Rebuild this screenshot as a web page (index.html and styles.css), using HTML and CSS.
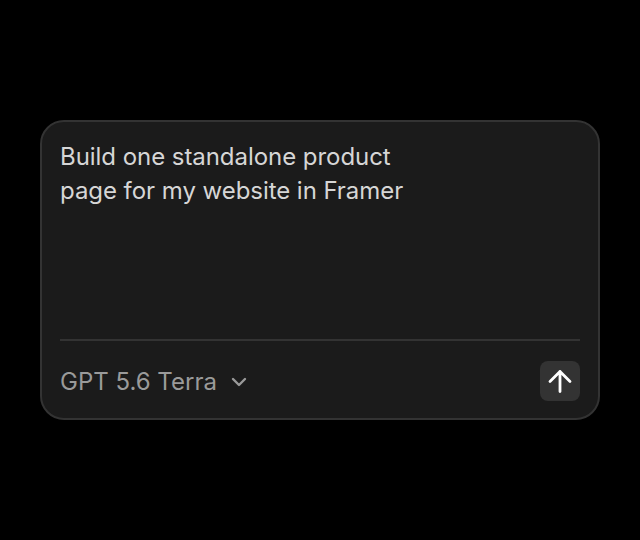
FILE: index.html
```html
<!DOCTYPE html>
<html lang="en">
<head>
    <meta charset="UTF-8">
    <title>Prompt</title>
    <link rel="stylesheet" href="styles.css">
</head>
<body>
    <div class="prompt">
        <div class="promptText">Build one standalone product<br>page for my website in Framer</div>
        <div class="promptBar">
            <div class="model">
                <span>GPT 5.6 Terra</span>
                <svg width="16" height="16" viewBox="0 0 16 16"><path d="M2 5l6 6 6-6" fill="none" stroke="#9a9a9a" stroke-width="2.4" stroke-linecap="round" stroke-linejoin="round"/></svg>
            </div>
            <div class="send">
                <svg width="26" height="26" viewBox="0 0 26 26"><path d="M13 23.5V3.5M3 13.5L13 3.5 23 13.5" fill="none" stroke="#fff" stroke-width="2.8" stroke-linecap="round" stroke-linejoin="round"/></svg>
            </div>
        </div>
    </div>
</body>
</html>
```

FILE: styles.css
```css
html,body{margin: 0; padding: 0;}
body{background-color: #000; width: 640px; height: 540px; display: flex; align-items: center; justify-content: center; font-family: Inter, "Noto Sans", sans-serif;}
.prompt{box-sizing: border-box; width: 560px; height: 300px; background-color: #1b1b1b; border: 2px solid #333; border-radius: 24px; padding: 18px 18px 17px; display: flex; flex-direction: column;}
.promptText{flex: 1; font-size: 24px; line-height: 34px; letter-spacing: -0.05px; color: #d6d6d6; border-bottom: 2px solid #333;}
.promptBar{display: flex; align-items: center; justify-content: space-between; height: 40px; margin-top: 20px;}
.model{display: flex; align-items: center; gap: 14px; font-size: 24px; color: #9a9a9a;}
.model svg{margin-top: 1px;}
.send{width: 40px; height: 40px; border-radius: 8px; background-color: #333; display: flex; align-items: center; justify-content: center;}
```
